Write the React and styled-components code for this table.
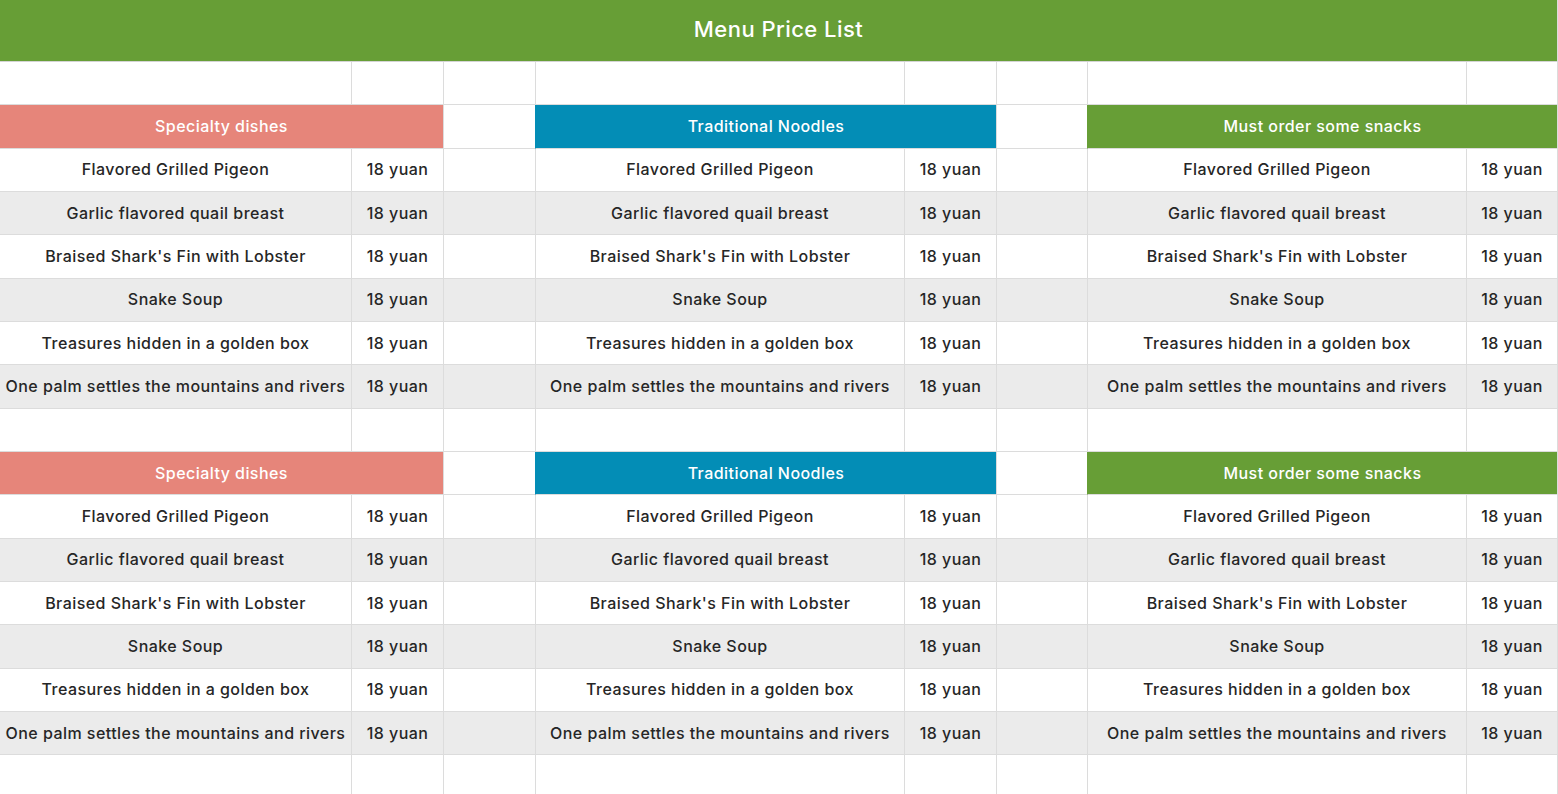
import React from 'react';
import styled, { createGlobalStyle } from 'styled-components';

const GlobalStyle = createGlobalStyle`
  html, body {
    margin: 0;
    padding: 0;
    overflow: hidden;
    background: #ffffff;
  }
  body {
    font-family: Inter, "Noto Sans", "Liberation Sans", sans-serif;
  }
`;

const Sheet = styled.div`
  display: grid;
  grid-template-columns: 351px 92px 92px 369px 92px 91px 379px 91px;
  grid-template-rows: 62px;
  grid-auto-rows: 43.333px;
  width: 1558px;
  box-sizing: border-box;
  border-right: 1px solid #dcdcdc;
`;

const Title = styled.div`
  grid-column: 1 / -1;
  display: flex;
  align-items: center;
  justify-content: center;
  padding-bottom: 4px;
  background: #679e36;
  color: #ffffff;
  font-size: 22px;
  font-weight: 500;
  letter-spacing: 0.45px;
  border-bottom: 1px solid #d4d4d4;
  box-sizing: border-box;
`;

const Cell = styled.div`
  display: flex;
  align-items: center;
  justify-content: center;
  box-sizing: border-box;
  padding-bottom: 1px;
  background: ${(p) => p.$bg || '#ffffff'};
  border-bottom: 1px solid #dcdcdc;
  border-left: ${(p) => (p.$first ? 'none' : '1px solid #dcdcdc')};
  color: #262626;
  font-size: 16px;
  font-weight: 500;
  letter-spacing: 0.45px;
  white-space: nowrap;
  overflow: hidden;
`;

const SectionHead = styled(Cell)`
  grid-column: span 2;
  color: #ffffff;
  background: ${(p) => p.$color};
  border-left-color: ${(p) => p.$color};
`;

const sections = [
  { title: 'Specialty dishes', color: '#e6857a' },
  { title: 'Traditional Noodles', color: '#038db6' },
  { title: 'Must order some snacks', color: '#679e36' },
];

const dishes = [
  'Flavored Grilled Pigeon',
  'Garlic flavored quail breast',
  "Braised Shark's Fin with Lobster",
  'Snake Soup',
  'Treasures hidden in a golden box',
  'One palm settles the mountains and rivers',
];

const BlankRow = () => (
  <>
    {Array.from({ length: 8 }).map((_, i) => (
      <Cell key={i} $first={i === 0} />
    ))}
  </>
);

const HeadRow = () => (
  <>
    {sections.map((s, i) => (
      <React.Fragment key={s.title}>
        <SectionHead $color={s.color} $first={i === 0}>
          {s.title}
        </SectionHead>
        {i < 2 && <Cell />}
      </React.Fragment>
    ))}
  </>
);

const DishRow = ({ name, shaded }) => {
  const bg = shaded ? '#ebebeb' : '#ffffff';
  return (
    <>
      {[0, 1, 2].map((i) => (
        <React.Fragment key={i}>
          <Cell $bg={bg} $first={i === 0}>{name}</Cell>
          <Cell $bg={bg}>18 yuan</Cell>
          {i < 2 && <Cell $bg={bg} />}
        </React.Fragment>
      ))}
    </>
  );
};

const Block = () => (
  <>
    <HeadRow />
    {dishes.map((d, i) => (
      <DishRow key={d} name={d} shaded={i % 2 === 1} />
    ))}
    <BlankRow />
  </>
);

const App = () => (
  <>
    <GlobalStyle />
    <Sheet>
      <Title>Menu Price List</Title>
      <BlankRow />
      <Block />
      <Block />
    </Sheet>
  </>
);

export default App;
